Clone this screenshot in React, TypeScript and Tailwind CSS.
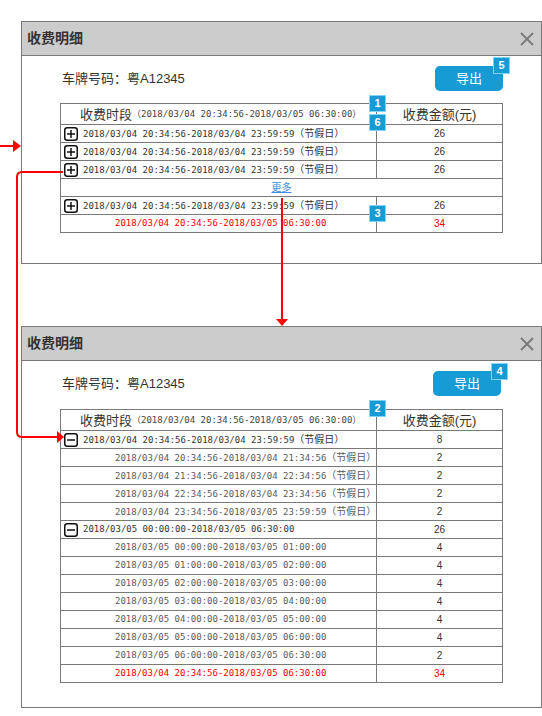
const mono = "font-['DejaVu_Sans_Mono','Noto_Sans_CJK_SC',monospace]";
const cjk = "font-['Liberation_Sans','Noto_Sans_CJK_SC',sans-serif]";

type Row = {
  kind: "group" | "sub" | "total" | "more";
  text?: string;
  tag?: boolean;
  value?: string;
  minus?: boolean;
};

const rowsTop: Row[] = [
  { kind: "group", text: "2018/03/04 20:34:56-2018/03/04 23:59:59", tag: true, value: "26" },
  { kind: "group", text: "2018/03/04 20:34:56-2018/03/04 23:59:59", tag: true, value: "26" },
  { kind: "group", text: "2018/03/04 20:34:56-2018/03/04 23:59:59", tag: true, value: "26" },
  { kind: "more" },
  { kind: "group", text: "2018/03/04 20:34:56-2018/03/04 23:59:59", tag: true, value: "26" },
  { kind: "total", text: "2018/03/04 20:34:56-2018/03/05 06:30:00", value: "34" },
];

const rowsBottom: Row[] = [
  { kind: "group", minus: true, text: "2018/03/04 20:34:56-2018/03/04 23:59:59", tag: true, value: "8" },
  { kind: "sub", text: "2018/03/04 20:34:56-2018/03/04 21:34:56", tag: true, value: "2" },
  { kind: "sub", text: "2018/03/04 21:34:56-2018/03/04 22:34:56", tag: true, value: "2" },
  { kind: "sub", text: "2018/03/04 22:34:56-2018/03/04 23:34:56", tag: true, value: "2" },
  { kind: "sub", text: "2018/03/04 23:34:56-2018/03/05 23:59:59", tag: true, value: "2" },
  { kind: "group", minus: true, text: "2018/03/05 00:00:00-2018/03/05 06:30:00", value: "26" },
  { kind: "sub", text: "2018/03/05 00:00:00-2018/03/05 01:00:00", value: "4" },
  { kind: "sub", text: "2018/03/05 01:00:00-2018/03/05 02:00:00", value: "4" },
  { kind: "sub", text: "2018/03/05 02:00:00-2018/03/05 03:00:00", value: "4" },
  { kind: "sub", text: "2018/03/05 03:00:00-2018/03/05 04:00:00", value: "4" },
  { kind: "sub", text: "2018/03/05 04:00:00-2018/03/05 05:00:00", value: "4" },
  { kind: "sub", text: "2018/03/05 05:00:00-2018/03/05 06:00:00", value: "4" },
  { kind: "sub", text: "2018/03/05 06:00:00-2018/03/05 06:30:00", value: "2" },
  { kind: "total", text: "2018/03/04 20:34:56-2018/03/05 06:30:00", value: "34" },
];

function ToggleBox({ minus }: { minus?: boolean }) {
  return (
    <svg width="14" height="14" viewBox="0 0 14 14" className="shrink-0">
      <rect x="0.75" y="0.75" width="12.5" height="12.5" rx="2.5" fill="none" stroke="#111" strokeWidth="1.5" />
      <line x1="3" y1="7" x2="11" y2="7" stroke="#111" strokeWidth="1.5" />
      {!minus && <line x1="7" y1="3" x2="7" y2="11" stroke="#111" strokeWidth="1.5" />}
    </svg>
  );
}

function Badge({ n, className }: { n: string; className: string }) {
  return (
    <div
      className={`absolute flex h-[17px] w-[17px] items-center justify-center border border-[#81d3f8] bg-[#169bd5] font-['Liberation_Sans',sans-serif] text-[11px] font-bold text-white ${className}`}
    >
      {n}
    </div>
  );
}

function TableRow({ row }: { row: Row }) {
  if (row.kind === "more") {
    return (
      <div className="flex h-[18px] items-center justify-center border-t border-[#797979]">
        <span className={`${cjk} text-[10px] leading-none text-[#3a8ee6] underline`}>更多</span>
      </div>
    );
  }
  const color =
    row.kind === "total" ? "text-[#ff0000]" : row.kind === "sub" ? "text-[#5a5a5a]" : "text-[#333]";
  return (
    <div className="flex h-[18px] border-t border-[#797979]">
      <div
        className={`flex w-[316px] items-center border-r border-[#797979] leading-none ${color} ${
          row.kind === "group" ? "gap-[5px] pl-[3px]" : "pl-[54px]"
        }`}
      >
        {row.kind === "group" && <ToggleBox minus={row.minus} />}
        <span className="whitespace-nowrap">
          {row.text}
          {row.tag && <span className="text-[10px]">（节假日）</span>}
        </span>
      </div>
      <div
        className={`flex flex-1 items-center justify-center ${cjk} text-[10px] leading-none ${
          row.kind === "total" ? "text-[#ff0000]" : "text-[#333]"
        }`}
      >
        {row.value}
      </div>
    </div>
  );
}

function Dialog({
  rows,
  heightClass,
  btnClass,
  tableClass,
}: {
  rows: Row[];
  heightClass: string;
  btnClass: string;
  tableClass: string;
}) {
  return (
    <div className={`flex w-[521px] flex-col border border-[#797979] bg-white ${heightClass}`}>
      <div className="flex h-[34px] items-center justify-between border-b border-[#797979] bg-[#cccccc] pl-[5px] pr-[7px]">
        <span className={`${cjk} text-[14px] font-bold text-[#333]`}>收费明细</span>
        <svg width="14" height="14" viewBox="0 0 14 14">
          <path d="M1 1 L13 13 M13 1 L1 13" stroke="#797979" strokeWidth="1.8" />
        </svg>
      </div>
      <div className="mt-[10px] flex items-center justify-between pl-[40px]">
        <span className={`${cjk} text-[13px] text-[#333]`}>车牌号码：粤A12345</span>
        <div
          className={`flex h-[25px] w-[68px] items-center justify-center rounded-[5px] bg-[#169bd5] ${cjk} text-[13px] text-white ${btnClass}`}
        >
          导出
        </div>
      </div>
      <div className={`ml-[38px] w-[443px] border border-[#797979] ${mono} text-[9px] ${tableClass}`}>
        <div className="flex h-[20px]">
          <div className="flex w-[316px] items-center whitespace-nowrap border-r border-[#797979] pl-[19px] leading-none text-[#444]">
            <span className={`${cjk} text-[13px] text-[#333]`}>收费时段</span>
            <span>（2018/03/04 20:34:56-2018/03/05 06:30:00）</span>
          </div>
          <div className={`flex flex-1 items-center justify-center ${cjk} text-[13px] leading-none text-[#333]`}>
            收费金额(元)
          </div>
        </div>
        {rows.map((r, i) => (
          <TableRow key={i} row={r} />
        ))}
      </div>
    </div>
  );
}

export default function App() {
  return (
    <div className="relative flex h-[716px] w-[542px] flex-col gap-[62px] bg-white pl-[21px] pt-[21px]">
      <Dialog rows={rowsTop} heightClass="h-[243px]" btnClass="mr-[38px]" tableClass="mt-[12px]" />
      <Dialog rows={rowsBottom} heightClass="h-[382px]" btnClass="mr-[40px]" tableClass="mt-[13px]" />

      <svg className="pointer-events-none absolute left-0 top-0" width="542" height="716" viewBox="0 0 542 716">
        <g stroke="#ff0000" strokeWidth="2" fill="none">
          <path d="M0 146 H14" />
          <path d="M63 172 H22 Q17 172 17 177 V432 Q17 437 22 437 H58" />
          <path d="M282 198 V320" />
        </g>
        <g fill="#ff0000">
          <polygon points="13,140 21,146 13,152" />
          <polygon points="57,431 64,437 57,443" />
          <polygon points="276,319 282,326 288,319" />
        </g>
      </svg>

      <Badge n="1" className="left-[369px] top-[95px]" />
      <Badge n="6" className="left-[369px] top-[114px]" />
      <Badge n="3" className="left-[369px] top-[205px]" />
      <Badge n="5" className="left-[493px] top-[57px]" />
      <Badge n="2" className="left-[369px] top-[400px]" />
      <Badge n="4" className="left-[491px] top-[363px]" />
    </div>
  );
}
